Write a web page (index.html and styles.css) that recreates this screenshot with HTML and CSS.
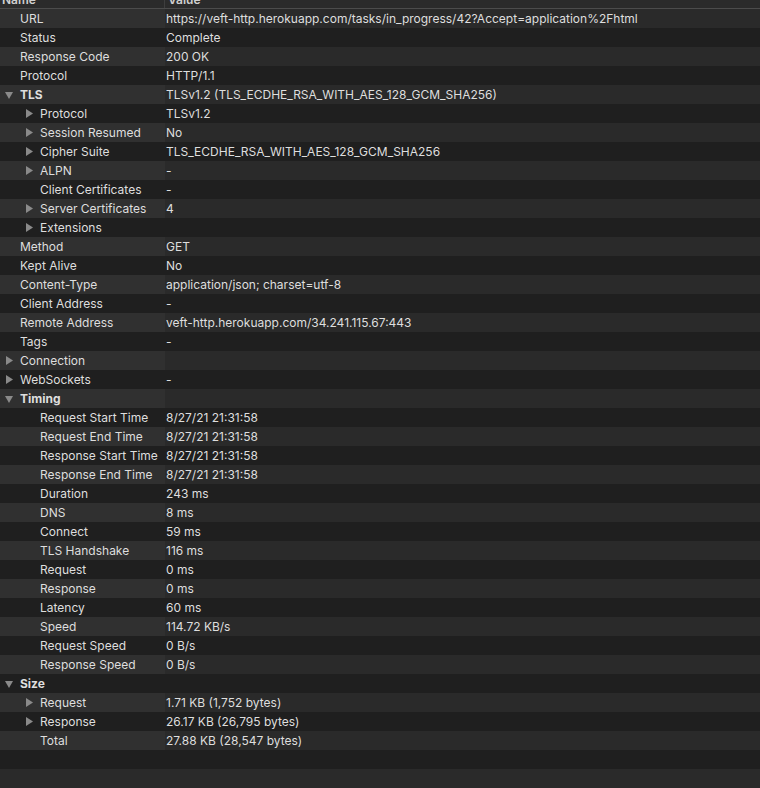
FILE: index.html
```html
<!DOCTYPE html>
<html>
<head>
<meta charset="utf-8">
<link rel="stylesheet" href="styles.css">
</head>
<body>
<div class="table">
  <div class="header">
    <div class="hcell name-h">Name</div>
    <div class="hcell">Value</div>
  </div>
  <div class="row"><div class="n l0">URL</div><div class="v">https://veft-http.herokuapp.com/tasks/in_progress/42?Accept=application%2Fhtml</div></div>
  <div class="row"><div class="n l0">Status</div><div class="v">Complete</div></div>
  <div class="row"><div class="n l0">Response Code</div><div class="v">200 OK</div></div>
  <div class="row"><div class="n l0">Protocol</div><div class="v">HTTP/1.1</div></div>
  <div class="row"><div class="n l0 bold"><svg class="tri down" viewBox="0 0 8 7"><polygon points="0,0 8,0 4,7"/></svg>TLS</div><div class="v">TLSv1.2 (TLS_ECDHE_RSA_WITH_AES_128_GCM_SHA256)</div></div>
  <div class="row"><div class="n l1"><svg class="tri right" viewBox="0 0 7 9"><polygon points="0,0 7,4.5 0,9"/></svg>Protocol</div><div class="v">TLSv1.2</div></div>
  <div class="row"><div class="n l1"><svg class="tri right" viewBox="0 0 7 9"><polygon points="0,0 7,4.5 0,9"/></svg>Session Resumed</div><div class="v">No</div></div>
  <div class="row"><div class="n l1"><svg class="tri right" viewBox="0 0 7 9"><polygon points="0,0 7,4.5 0,9"/></svg>Cipher Suite</div><div class="v">TLS_ECDHE_RSA_WITH_AES_128_GCM_SHA256</div></div>
  <div class="row"><div class="n l1"><svg class="tri right" viewBox="0 0 7 9"><polygon points="0,0 7,4.5 0,9"/></svg>ALPN</div><div class="v">-</div></div>
  <div class="row"><div class="n l1">Client Certificates</div><div class="v">-</div></div>
  <div class="row"><div class="n l1"><svg class="tri right" viewBox="0 0 7 9"><polygon points="0,0 7,4.5 0,9"/></svg>Server Certificates</div><div class="v">4</div></div>
  <div class="row"><div class="n l1"><svg class="tri right" viewBox="0 0 7 9"><polygon points="0,0 7,4.5 0,9"/></svg>Extensions</div><div class="v"></div></div>
  <div class="row"><div class="n l0">Method</div><div class="v">GET</div></div>
  <div class="row"><div class="n l0">Kept Alive</div><div class="v">No</div></div>
  <div class="row"><div class="n l0">Content-Type</div><div class="v">application/json; charset=utf-8</div></div>
  <div class="row"><div class="n l0">Client Address</div><div class="v">-</div></div>
  <div class="row"><div class="n l0">Remote Address</div><div class="v">veft-http.herokuapp.com/34.241.115.67:443</div></div>
  <div class="row"><div class="n l0">Tags</div><div class="v">-</div></div>
  <div class="row"><div class="n l0"><svg class="tri right" viewBox="0 0 7 9"><polygon points="0,0 7,4.5 0,9"/></svg>Connection</div><div class="v"></div></div>
  <div class="row"><div class="n l0"><svg class="tri right" viewBox="0 0 7 9"><polygon points="0,0 7,4.5 0,9"/></svg>WebSockets</div><div class="v">-</div></div>
  <div class="row"><div class="n l0 bold"><svg class="tri down" viewBox="0 0 8 7"><polygon points="0,0 8,0 4,7"/></svg>Timing</div><div class="v"></div></div>
  <div class="row"><div class="n l1">Request Start Time</div><div class="v">8/27/21 21:31:58</div></div>
  <div class="row"><div class="n l1">Request End Time</div><div class="v">8/27/21 21:31:58</div></div>
  <div class="row"><div class="n l1">Response Start Time</div><div class="v">8/27/21 21:31:58</div></div>
  <div class="row"><div class="n l1">Response End Time</div><div class="v">8/27/21 21:31:58</div></div>
  <div class="row"><div class="n l1">Duration</div><div class="v">243 ms</div></div>
  <div class="row"><div class="n l1">DNS</div><div class="v">8 ms</div></div>
  <div class="row"><div class="n l1">Connect</div><div class="v">59 ms</div></div>
  <div class="row"><div class="n l1">TLS Handshake</div><div class="v">116 ms</div></div>
  <div class="row"><div class="n l1">Request</div><div class="v">0 ms</div></div>
  <div class="row"><div class="n l1">Response</div><div class="v">0 ms</div></div>
  <div class="row"><div class="n l1">Latency</div><div class="v">60 ms</div></div>
  <div class="row"><div class="n l1">Speed</div><div class="v">114.72 KB/s</div></div>
  <div class="row"><div class="n l1">Request Speed</div><div class="v">0 B/s</div></div>
  <div class="row"><div class="n l1">Response Speed</div><div class="v">0 B/s</div></div>
  <div class="row"><div class="n l0 bold"><svg class="tri down" viewBox="0 0 8 7"><polygon points="0,0 8,0 4,7"/></svg>Size</div><div class="v"></div></div>
  <div class="row"><div class="n l1"><svg class="tri right" viewBox="0 0 7 9"><polygon points="0,0 7,4.5 0,9"/></svg>Request</div><div class="v">1.71 KB (1,752 bytes)</div></div>
  <div class="row"><div class="n l1"><svg class="tri right" viewBox="0 0 7 9"><polygon points="0,0 7,4.5 0,9"/></svg>Response</div><div class="v">26.17 KB (26,795 bytes)</div></div>
  <div class="row"><div class="n l1">Total</div><div class="v">27.88 KB (28,547 bytes)</div></div>
  <div class="row empty"></div>
  <div class="row empty"></div>
</div>
</body>
</html>
```
FILE: styles.css
```css
html, body {
  margin: 0;
  padding: 0;
  background: #1f1f1f;
  overflow: hidden;
}
body {
  font-family: "Inter", "Liberation Sans", sans-serif;
  font-size: 12px;
  color: #dedede;
  height: 788px;
}
.table {
  display: flex;
  flex-direction: column;
}
.header {
  display: grid;
  grid-template-columns: 165px 1fr;
  height: 17px;
  margin-top: -9px;
  background: #2b2b2b;
  border-bottom: 1px solid #4c4c4c;
  font-weight: 600;
  line-height: 17px;
  color: #d0d0d0;
}
.hcell {
  padding-left: 3px;
}
.name-h {
  padding-left: 2px;
  border-right: 1px solid #3e3e3e;
}
.row {
  display: grid;
  grid-template-columns: 165px 1fr;
  height: 19px;
  line-height: 19px;
  white-space: nowrap;
}
.row:nth-child(even) {
  background: #2a2a2a;
}
.row:nth-child(even) .n {
  background: #303030;
}
.row:nth-child(odd) {
  background: #1f1f1f;
}
.row.empty .n { background: transparent; }
.n {
  position: relative;
  overflow: hidden;
}
.l0 { padding-left: 20px; }
.l1 { padding-left: 40px; }
.bold { font-weight: 700; }
.v {
  padding-left: 1px;
  overflow: hidden;
}
.tri {
  position: absolute;
  fill: #8a8a8a;
}
.l0 .tri.down { left: 5px; top: 7px; width: 8px; height: 7px; }
.l0 .tri.right { left: 6px; top: 5px; width: 7px; height: 9px; }
.l1 .tri.right { left: 26px; top: 5px; width: 7px; height: 9px; }
```
